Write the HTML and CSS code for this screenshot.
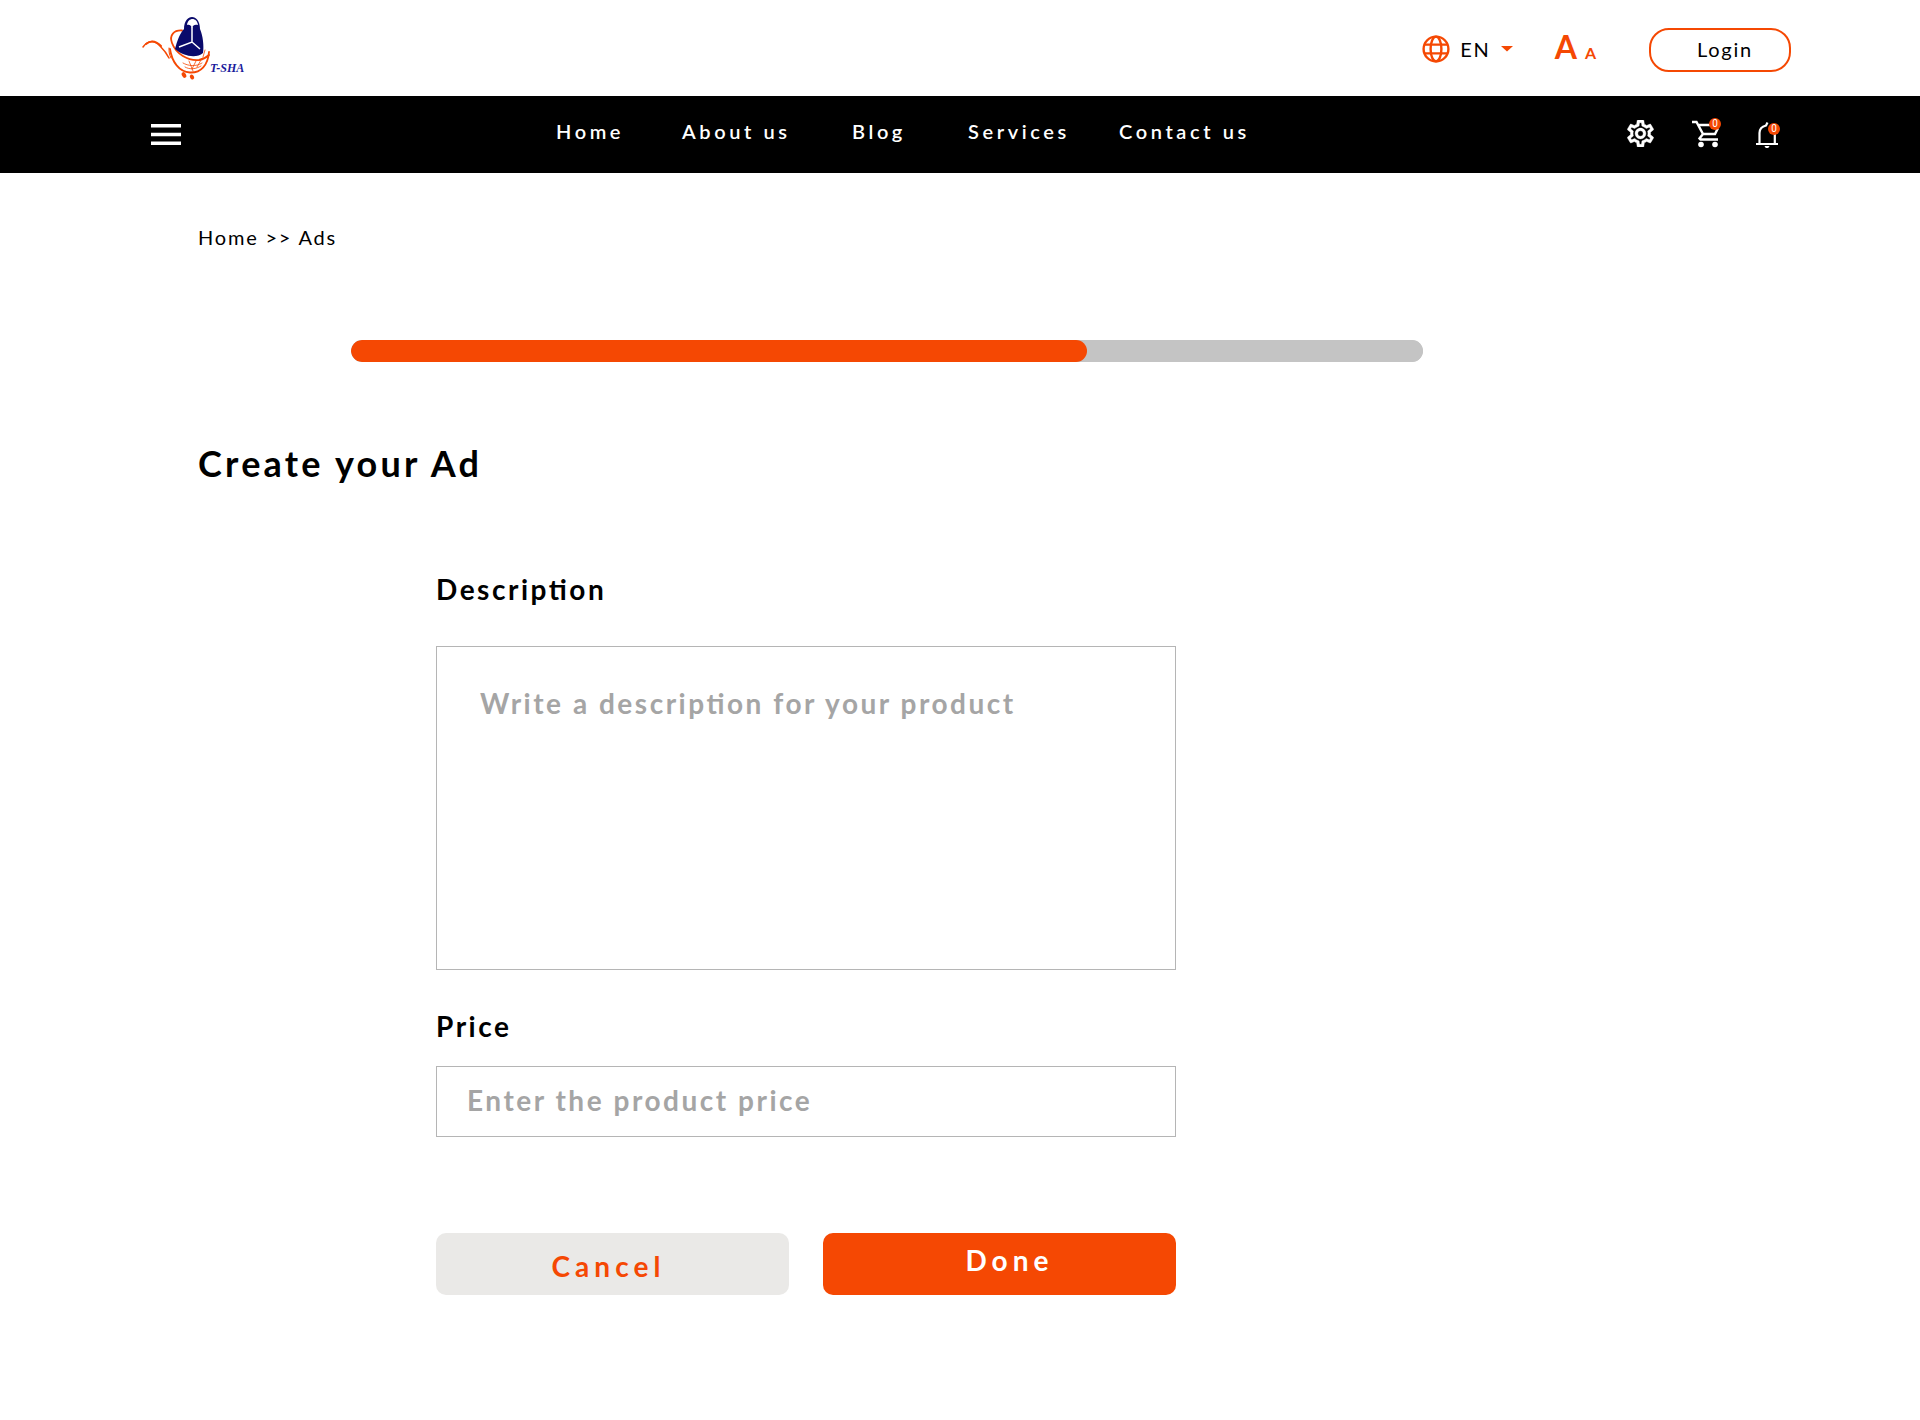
FILE: index.html
```html
<!DOCTYPE html>
<html lang="en">
<head>
<meta charset="utf-8">
<meta name="viewport" content="width=device-width, initial-scale=1">
<title>T-SHA - Create your Ad</title>
<link rel="stylesheet" href="styles.css">
</head>
<body>
<header class="topbar">
  <a class="logo" href="#" aria-label="T-SHA home">
    <svg width="112" height="72" viewBox="0 0 112 72">
      <g fill="none" stroke="#f54803" stroke-linecap="round">
        <path d="M3 35C8 28 14 28 20 34C24 38 27 42 29 46" stroke-width="1.500"/>
        <path d="M6 32C11 28 16 29 21 34" stroke-width="2"/>
        <path d="M29 36C29 40 29 42 31 46" stroke-width="1"/>
        <path d="M30 37C32 50 39 60 50 60.500C61 61 68 53 69 40" stroke-width="1.800"/>
        <path d="M42 18.500C34 18 29 23 32 31C36 42 48 49 59 48C64 47 67 45 69 43" stroke-width="1.800"/>
        <path d="M65 38L63 45M43 51C48 54 56 55 62 51M45 55C50 58 56 57 61 54M49 49L53 59M56 49L52 57M61 48L57 55" stroke-width=".8"/>
      </g>
      <path fill="#0a0a6b" fill-rule="evenodd" d="M44 17C44 1 60 1 60 17C63 24 64 34 63 41C56 47 43 44 35 37C37 29 40 21 44 17ZM47 13C49 12 51 13 52 16C53 13 55 12 58 13C57 5 48 5 47 13Z"/>
      <path d="M52 15V30M39 35L52 30L60 37" fill="none" stroke="#fff" stroke-width="1.500"/>
      <ellipse cx="44" cy="63" rx="2" ry="3" fill="#f54803" transform="rotate(-30 44 63)"/>
      <ellipse cx="52" cy="65" rx="2" ry="2.600" fill="#f54803" transform="rotate(-30 52 65)"/>
      <text class="logo-text" x="70" y="60">T-SHA</text>
    </svg>
  </a>
  <div class="tools">
    <button class="tool language" type="button">
      <svg width="28" height="28" viewBox="0 0 28 28" fill="none" stroke="#f54803" stroke-width="2.400">
        <circle cx="14" cy="14" r="12.400"/><ellipse cx="14" cy="14" rx="5.400" ry="12.400"/><path d="M2.500 9.600h23M2.500 18.400h23"/>
      </svg>
      <span>EN</span>
      <svg width="12" height="6" viewBox="0 0 12 6"><path d="M0 0h12L6 5.500Z" fill="#f54803"/></svg>
    </button>
    <button class="tool text-size" type="button" aria-label="Text size"><span class="large">A</span><span class="small">A</span></button>
    <button class="login" type="button">Login</button>
  </div>
</header>
<nav class="mainbar">
  <button class="icon-button" type="button" aria-label="Menu">
    <svg width="30" height="21" viewBox="0 0 30 21" fill="#fff"><path d="M0 0h30v3.500H0zM0 8.700h30v3.500H0zM0 17.400h30v3.500H0z"/></svg>
  </button>
  <div class="links">
    <a href="#">Home</a><a href="#">About us</a><a href="#">Blog</a><a href="#">Services</a><a href="#">Contact us</a>
  </div>
  <div class="actions">
    <button class="icon-button" type="button" aria-label="Settings">
      <svg width="27" height="27" viewBox="2 2 20 20" fill="#fff" stroke="#fff" stroke-width=".3"><path d="M19.430 12.980c.04-.32.07-.64.07-.98 0-.34-.03-.66-.07-.98l2.110-1.650c.19-.15.24-.42.12-.64l-2-3.460c-.09-.16-.26-.25-.44-.25-.06 0-.12.01-.17.03l-2.490 1c-.52-.4-1.080-.73-1.690-.98l-.38-2.650C14.460 2.180 14.250 2 14 2h-4c-.25 0-.46.18-.49.42l-.38 2.650c-.61.25-1.170.59-1.690.98l-2.490-1c-.06-.02-.12-.03-.18-.03-.17 0-.34.09-.43.25l-2 3.460c-.13.22-.07.49.12.64l2.110 1.650c-.04.32-.07.65-.07.98 0 .33.03.66.07.98l-2.110 1.650c-.19.15-.24.42-.12.64l2 3.460c.09.16.26.25.44.25.06 0 .12-.01.17-.03l2.490-1c.52.4 1.080.73 1.690.98l.38 2.650c.03.24.24.42.49.42h4c.25 0 .46-.18.49-.42l.38-2.650c.61-.25 1.170-.59 1.690-.98l2.490 1c.06.02.12.03.18.03.17 0 .34-.09.43-.25l2-3.460c.12-.22.07-.49-.12-.64l-2.110-1.650zm-1.980-1.710c.04.31.05.52.05.73 0 .21-.02.43-.05.73l-.14 1.130.89.7 1.080.84-.7 1.210-1.270-.51-1.040-.42-.9.68c-.43.32-.84.56-1.250.73l-1.060.43-.16 1.130-.2 1.350h-1.400l-.19-1.350-.16-1.130-1.060-.43c-.43-.18-.83-.41-1.230-.71l-.91-.7-1.060.43-1.270.51-.7-1.210 1.080-.84.89-.7-.14-1.130c-.03-.31-.05-.54-.05-.74s.02-.43.05-.73l.14-1.130-.89-.7-1.080-.84.7-1.210 1.270.51 1.040.42.9-.68c.43-.32.84-.56 1.250-.73l1.060-.43.16-1.130.2-1.350h1.390l.19 1.350.16 1.130 1.060.43c.43.18.83.41 1.230.71l.91.7 1.060-.43 1.270-.51.7 1.210-1.070.85-.89.7.14 1.130zM12 8c-2.210 0-4 1.790-4 4s1.790 4 4 4 4-1.790 4-4-1.790-4-4-4zm0 6c-1.100 0-2-.9-2-2s.9-2 2-2 2 .9 2 2-.9 2-2 2z"/></svg>
    </button>
    <button class="icon-button cart" type="button" aria-label="Cart">
      <svg width="28" height="28" viewBox="0 0 28 28" fill="none" stroke="#fff" stroke-width="2.400"><path d="M1 2h4.500l6.500 12h12l4-8M8 5h13M12 14l-3.500 4.500 1 1H27"/><circle cx="10" cy="24.500" r="2.800" fill="#fff" stroke="none"/><circle cx="24" cy="24.500" r="2.800" fill="#fff" stroke="none"/></svg>
      <span class="badge">0</span>
    </button>
    <button class="icon-button bell" type="button" aria-label="Notifications">
      <svg width="22" height="28" viewBox="0 0 22 28" fill="none" stroke="#fff" stroke-width="2.200"><path d="M0 24h22M3.500 24V13C3.500 9 6 6.500 10 5.500L11.500 2.500M18.800 24V12"/><path d="M8.500 26h5c-1 3-4 3-5 0Z" fill="#fff" stroke="none"/></svg>
      <span class="badge">0</span>
    </button>
  </div>
</nav>
<main class="page">
  <div class="breadcrumb"><a href="#">Home</a> &gt;&gt; <a href="#">Ads</a></div>
  <progress class="steps" value="736" max="1072" aria-label="Ad progress"></progress>
  <h1>Create your Ad</h1>
  <form class="ad-form">
    <label for="description">Description</label>
    <textarea id="description" placeholder="Write a description for your product"></textarea>
    <label for="price">Price</label>
    <input id="price" type="text" placeholder="Enter the product price">
    <div class="buttons">
      <button class="cancel" type="button">Cancel</button>
      <button class="done" type="submit">Done</button>
    </div>
  </form>
</main>
</body>
</html>
```
FILE: styles.css
```css
* { box-sizing: border-box; }
body {
  margin: 0;
  background: #fff;
  color: #000;
  font: 20px/24px Lato, Carlito, sans-serif;
  font-feature-settings: "liga" 1;
}
button, input, textarea { font: inherit; font-feature-settings: inherit; letter-spacing: inherit; }
button { padding: 0; border: 0; background: none; color: inherit; cursor: pointer; }
a { color: inherit; text-decoration: none; }
svg { display: block; }

.topbar { display: flex; align-items: center; justify-content: space-between; height: 96px; padding: 0 129px 0 140px; }
.logo-text { font: italic 700 12px "Liberation Serif", serif; fill: #1a1a9c; }
.tools { display: flex; align-items: center; padding-top: 4px; }
.tool { display: flex; align-items: center; }
.language { gap: 10px; margin-right: 42px; padding-bottom: 3px; letter-spacing: 0.09em; }
.text-size { align-items: baseline; gap: 8px; margin-right: 53px; color: #f54803; font-weight: 700; line-height: 40px; }
.large { font-size: 32px; }
.small { font-size: 16px; }
.login { width: 142px; height: 44px; padding: 0 0 2px 10px; border: 2px solid #f54803; border-radius: 20px; letter-spacing: 0.09em; }

.mainbar { display: flex; align-items: center; height: 77px; padding: 0 142px 0 151px; background: #000; color: #fff; }
.links { display: grid; grid-template-columns: 126px 170px 116px 151px auto; margin: 0 auto 8px 375px; font-weight: 600; letter-spacing: 0.18em; white-space: nowrap; }
.actions { display: flex; align-items: center; gap: 37px; padding-bottom: 2px; }
.icon-button { position: relative; }
.badge {
  position: absolute; top: -2px; right: -2px;
  width: 12px; height: 12px; border-radius: 50%;
  background: #f54803; color: #fff; font: 10px/12px Roboto, sans-serif; text-align: center; letter-spacing: 0;
}
.bell .badge { top: 3px; }

.page { padding: 52px 198px 120px; }
.breadcrumb { letter-spacing: 0.09em; }
.steps {
  display: block; width: calc(100% - 452px); height: 22px; margin: 91px 0 79px 153px;
  appearance: none; border: 0; border-radius: 11px; overflow: hidden; background: #c4c4c4;
}
.steps::-webkit-progress-bar { background: #c4c4c4; border-radius: 11px; }
.steps::-webkit-progress-value { background: #f54803; border-radius: 11px; }
h1 { margin: 0; font-size: 36px; line-height: 44px; font-weight: 700; letter-spacing: 0.09em; }
.ad-form {
  display: flex; flex-direction: column; max-width: 740px; margin: 87px 0 0 238px;
  font-size: 28px; line-height: 34px; font-weight: 700; letter-spacing: 0.09em;
}
textarea, input { width: 100%; border: 1px solid #b5b5b5; border-radius: 0; background: #fff; color: #000; outline: 0; }
textarea { height: 324px; margin: 40px 0 39px; padding: 39px 43px; resize: none; }
input { height: 71px; margin-top: 23px; padding: 0 30px 4px; }
::placeholder { color: #a5a5a5; opacity: 1; }
.buttons { display: grid; grid-template-columns: 1fr 1fr; gap: 34px; margin-top: 96px; }
.buttons button { height: 62px; border-radius: 10px; letter-spacing: 0.18em; }
.cancel { padding: 4px 8px 0 0; background: #eae9e7; color: #f54803; }
.done { padding: 0 0 8px 20px; background: #f54803; color: #fff; }
```
